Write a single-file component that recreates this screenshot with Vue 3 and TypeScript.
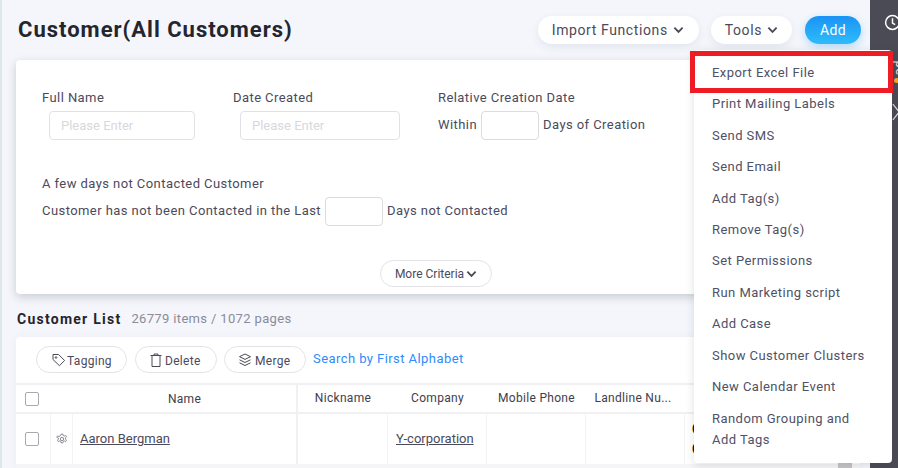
<script setup lang="ts">
const menu: string[] = [
  'Print Mailing Labels', 'Send SMS', 'Send Email', 'Add Tag(s)', 'Remove Tag(s)', 'Set Permissions',
  'Run Marketing script', 'Add Case', 'Show Customer Clusters', 'New Calendar Event',
]
const heads: { label: string; w: number }[] = [
  { label: 'Nickname', w: 90 },
  { label: 'Company', w: 99 },
  { label: 'Mobile Phone', w: 99 },
  { label: 'Landline Nu...', w: 99 },
]
</script>

<template>
  <div class="page">
    <div class="strip"></div>
    <main class="main">
      <header class="top">
        <h1>Customer(All Customers)</h1>
        <div class="actions">
          <button class="pill">Import Functions
            <svg class="chev" viewBox="0 0 12 8"><path d="M1.5 1.5 6 6l4.5-4.5" /></svg>
          </button>
          <button class="pill tools-pill">Tools
            <svg class="chev" viewBox="0 0 12 8"><path d="M1.5 1.5 6 6l4.5-4.5" /></svg>
          </button>
          <button class="add">Add</button>
        </div>
      </header>

      <section class="filter">
        <div class="fields">
          <div class="f f1">
            <div class="lbl">Full Name</div>
            <div class="ph w1">Please Enter</div>
          </div>
          <div class="f f2">
            <div class="lbl">Date Created</div>
            <div class="ph w2">Please Enter</div>
          </div>
          <div class="f">
            <div class="lbl">Relative Creation Date</div>
            <div class="inline"><span>Within</span><span class="box"></span><span>Days of Creation</span></div>
          </div>
        </div>
        <div class="lbl few">A few days not Contacted Customer</div>
        <div class="inline"><span>Customer has not been Contacted in the Last</span><span class="box"></span><span>Days not Contacted</span></div>
        <div class="more-row">
          <button class="more">More Criteria
            <svg class="chev" viewBox="0 0 12 8"><path d="M1.5 1.5 6 6l4.5-4.5" /></svg>
          </button>
        </div>
      </section>

      <div class="list-title"><strong>Customer List</strong><span>26779 items / 1072 pages</span></div>

      <section class="list">
        <div class="tools">
          <button class="tool t-tag">
            <svg viewBox="0 0 16 16"><path d="M2 2.500h5.600l6 6-5.200 5.200-6.400-6.200z" /><circle cx="5" cy="5.500" r=".8" /></svg>Tagging
          </button>
          <button class="tool t-del">
            <svg viewBox="0 0 16 16"><path d="M2.500 3.500h11M6 3.500V2h4v1.500M4 3.500v11h8v-11" /></svg>Delete
          </button>
          <button class="tool t-mrg">
            <svg viewBox="0 0 16 16"><path d="M8 2l5.500 2.700L8 7.400 2.500 4.700zM2.500 7.800 8 10.500l5.500-2.700M2.500 10.800 8 13.500l5.500-2.700" /></svg>Merge
          </button>
          <a class="alpha">Search by First Alphabet</a>
        </div>
        <div class="thead">
          <div class="c-check"><span class="check"></span></div>
          <div class="c-name">Name</div>
          <div v-for="h in heads" :key="h.label" class="th" :style="{ width: h.w + 'px' }">{{ h.label }}</div>
        </div>
        <div class="trow">
          <div class="td td-check"><span class="check"></span></div>
          <div class="td td-gear">
            <svg viewBox="0 0 16 16"><circle cx="8" cy="8" r="2.200" /><path d="M6.800 1.500h2.400l.4 1.900 1.500.7 1.700-1 1.200 2-1.400 1.400v1.600l1.400 1.400-1.200 2-1.700-1-1.500.7-.4 1.900H6.800l-.4-1.900-1.500-.7-1.700 1-1.200-2 1.400-1.400V7.200L1 5.800l1.200-2 1.700 1 1.500-.7z" /></svg>
          </div>
          <div class="td td-name"><a>Aaron Bergman</a></div>
          <div class="td" style="width: 90px"></div>
          <div class="td td-co" style="width: 99px"><a>Y-corporation</a></div>
          <div class="td" style="width: 99px"></div>
          <div class="td" style="width: 99px"></div>
          <div class="td td-cut">C<br />C</div>
        </div>
        <div class="tfoot"></div>
      </section>
    </main>
    <aside class="side">
      <svg class="clock" viewBox="0 0 16 16"><circle cx="8" cy="8" r="6.500" /><path d="M8 4v4.500l2.500 1.500" /></svg>
      <span class="vert">pe</span>
      <span class="dot"></span>
      <svg class="next" viewBox="0 0 10 24"><path d="M1 2l8 10-8 10" /></svg>
    </aside>

    <div class="scrollbar"></div>

    <div class="menu">
      <div class="item first">Export Excel File</div>
      <div v-for="m in menu" :key="m" class="item">{{ m }}</div>
      <div class="item last">Random Grouping and<br />Add Tags</div>
    </div>
    <div class="redbox"></div>
  </div>
</template>

<style>
html, body { margin: 0; padding: 0; overflow: hidden; }
</style>

<style scoped>
* { box-sizing: border-box; }
.page {
  position: relative; width: 898px; height: 468px; display: flex; overflow: hidden;
  background: #f4f6fb; color: #4b4a5c;
  font: 13px/20px Roboto, "Liberation Sans", sans-serif; letter-spacing: .43px;
}
.strip { width: 2px; background: #dfe6ec; flex: none; }
.main { width: 868px; flex: none; padding: 0 10px 0 14px; }
.side { position: relative; flex: 1; background: #4a4b55; color: #fff; }
.top { height: 60px; display: flex; align-items: center; justify-content: space-between; }
h1 { margin: 0 0 1px 2px; font-size: 22px; line-height: 28px; font-weight: 700; color: #25252e; letter-spacing: 1px; }
.actions { display: flex; gap: 12px; margin-right: -1px; align-items: center; }
button { font: inherit; letter-spacing: inherit; color: inherit; border: 0; padding: 0; background: none; }
.pill { height: 28px; padding: 0 15px 0 14px; border-radius: 14px; background: #fff; font-size: 14px; letter-spacing: .6px; box-shadow: 0 3px 8px rgba(60,70,100,.09); display: flex; align-items: center; gap: 5px; }
.tools-pill { padding-right: 14px; }
.chev { width: 11px; height: 8px; fill: none; stroke: #4a4a55; stroke-width: 2; }
.add { width: 56px; height: 28px; margin-left: 1px; border-radius: 14px; color: #fff; font-size: 14px; background: linear-gradient(#1a93f5, #2ebcfb); box-shadow: 0 3px 9px rgba(40,150,250,.3); }
.filter { height: 234px; background: #fff; border-radius: 4px; padding: 28px 26px 0; box-shadow: 0 3px 10px rgba(50,55,75,.22); }
.fields { display: flex; height: 80px; }
.f { flex: none; }
.f1 { width: 191px; }
.f2 { width: 205px; }
.lbl { height: 20px; }
.ph { height: 29px; margin-top: 3px; border: 1px solid #e2e2e6; border-radius: 4px; color: #d8d8dc; font-size: 13px; line-height: 27px; letter-spacing: 0; padding-left: 11px; }
.w1 { width: 146px; margin-left: 7px; }
.w2 { width: 160px; margin-left: 7px; }
.inline { display: flex; align-items: flex-start; gap: 4px; height: 29px; margin-top: 3px; line-height: 27px; white-space: nowrap; }
.box { display: block; width: 58px; height: 29px; border: 1px solid #dcdce0; border-radius: 4px; }
.few { margin-top: 6px; }
.more-row { display: flex; margin-top: 34px; padding-left: 338px; }
.more { width: 112px; height: 27px; border: 1px solid #e3e3e6; border-radius: 14px; background: #fff; font-size: 12px; letter-spacing: 0; display: flex; align-items: center; justify-content: center; gap: 2px; }
.list-title { height: 43px; display: flex; align-items: center; padding: 7px 0 0 1px; gap: 10px; }
.list-title strong { color: #25252e; letter-spacing: 1.250px; font-size: 14px; }
.list-title span { color: #8b8b99; letter-spacing: .35px; }
.list { height: 131px; background: #fff; border-radius: 4px 0 0 0; box-shadow: 0 0 8px rgba(50,55,75,.05); overflow: hidden; }
.tools { height: 46px; display: flex; align-items: flex-start; padding: 9px 0 0 20px; gap: 7px; }
.tool { height: 27px; padding: 2px 0 0 14px; border: 1px solid #e3e3e6; border-radius: 14px; background: #fff; display: flex; align-items: center; font-size: 12px; letter-spacing: .3px; }
.t-tag { width: 91px; margin-right: 1px; }
.t-del { width: 82px; padding-left: 12px; gap: 1px; }
.t-mrg { width: 82px; padding-left: 12px; gap: 2px; }
.tool svg { width: 16px; height: 16px; margin-top: -2px; fill: none; stroke: #4a4a55; stroke-width: 1; }
.alpha { color: #2f8bfa; margin-top: 3px; }
.thead { height: 31px; display: flex; border-top: 2px solid #f1f1f4; border-bottom: 2px solid #f1f1f4; align-items: center; font-size: 12px; letter-spacing: .3px; }
.c-check { width: 35px; padding-left: 9px; display: flex; }
.c-name { width: 247px; height: 100%; text-align: center; line-height: 28px; border-right: 2px solid #f1f1f4; padding-left: 22px; color: #3e3e4d; }
.th { text-align: center; white-space: nowrap; margin-top: -2px; color: #3e3e4d; }
.th:last-child { padding-right: 5px; }
.check { display: block; width: 14px; height: 14px; border: 1px solid #a9a9b0; border-radius: 2px; background: #fff; }
.trow { height: 50px; display: flex; }
.td { height: 100%; flex: none; border-right: 1px solid #f3f3f5; display: flex; align-items: center; }
.td-check { width: 35px; padding-left: 9px; }
.td-gear { width: 22px; justify-content: center; }
.td-gear svg { width: 12px; height: 12px; fill: none; stroke: #6a6a75; stroke-width: 1; }
.td-name { width: 225px; padding-left: 7px; border-right: 2px solid #f1f1f4; }
a { white-space: nowrap; }
.td a { text-decoration: underline; color: #4b4a5c; letter-spacing: 0; }
.td-co { padding-left: 8px; }
.td-cut { border: 0; padding-left: 7px; color: #111; font-size: 14px; font-weight: 700; line-height: 20px; display: block; padding-top: 5px; }
.tfoot { height: 4px; background: #f5f5f7; }
.clock { position: absolute; left: 14px; top: 14px; width: 17px; height: 17px; fill: none; stroke: #fff; stroke-width: 1.400; }
.vert { position: absolute; left: 22px; top: 58px; transform: rotate(90deg); font-size: 13px; color: #e9e9ec; }
.dot { position: absolute; left: 24px; top: 78px; width: 5px; height: 5px; border-radius: 50%; background: #f5a623; }
.next { position: absolute; left: 22px; top: 100px; width: 8px; height: 24px; fill: none; stroke: #e5e5e8; stroke-width: 1.500; }
.scrollbar { position: absolute; left: 838px; top: 462px; width: 14px; height: 6px; background: #c4c4c6; }
.menu { position: absolute; left: 694px; top: 50px; width: 198px; height: 413px; background: #fff; border-radius: 4px; box-shadow: 0 2px 10px rgba(40,40,60,.14); padding: 7px 0 0 18px; }
.item { height: 31.400px; line-height: 31.400px; white-space: nowrap; color: #4f5165; letter-spacing: .45px; }
.item.last { height: auto; line-height: 21px; margin-top: 6px; }
.redbox { position: absolute; left: 690px; top: 51px; width: 203px; height: 42px; border: 5px solid #ee1c25; }
</style>
